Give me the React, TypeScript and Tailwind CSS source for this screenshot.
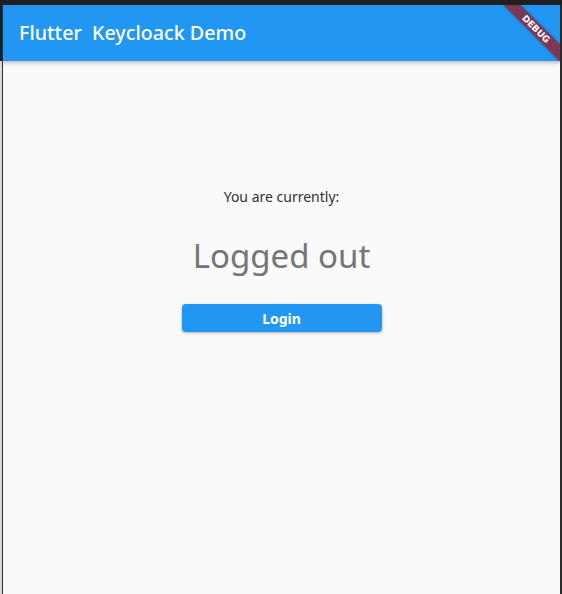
import React from "react";

export default function App() {
  const font = { fontFamily: '"Noto Sans", "Open Sans", sans-serif' };
  return (
    <div className="w-[562px] h-[594px] bg-[#1f1f1f] flex flex-col overflow-hidden" style={font}>
      <div className="h-[5px] shrink-0" />
      <div className="flex-1 flex flex-row min-h-0">
        <div className="w-[2px] flex flex-col">
          <div className="h-[56px] bg-[#1f1f1f]" />
          <div className="flex-1 bg-[#dadada]" />
        </div>
        <div className="flex-1 relative overflow-hidden flex flex-col bg-[#fafafa] border-l border-l-[#2d2d2d] border-r-2 border-r-[#2a2a2a]">
          <div className="h-[56px] shrink-0 bg-[#2196f3] flex items-center px-[16px] shadow-[0_2px_4px_rgba(0,0,0,0.25)] relative z-10">
            <span className="text-white text-[19.7px] font-medium whitespace-pre leading-none">Flutter  Keycloack Demo</span>
          </div>
          <div className="flex-1 flex flex-col items-center pt-[126px]">
            <div className="text-[14px] leading-[20px] text-[#303030]">You are currently:</div>
            <div className="mt-[29px] text-[33px] leading-[40px] text-[#757575]">Logged out</div>
            <button className="mt-[28px] w-[200px] h-[28px] rounded-[4px] bg-[#2196f3] text-white text-[14px] font-bold shadow-[0_1px_3px_rgba(0,0,0,0.3)] flex items-center justify-center">
              Login
            </button>
          </div>
          <div className="absolute right-0 top-0 w-0 h-0 rotate-45 origin-top-left z-20">
            <div className="absolute left-[-40px] top-[28px] w-[80px] h-[12px] bg-[#7c3754] flex items-center justify-center shadow-[0_0_3px_rgba(0,0,0,0.3)]">
              <span className="text-white text-[9px] font-bold leading-none" style={{ fontFamily: '"DejaVu Sans", sans-serif' }}>DEBUG</span>
            </div>
          </div>
        </div>
      </div>
    </div>
  );
}
